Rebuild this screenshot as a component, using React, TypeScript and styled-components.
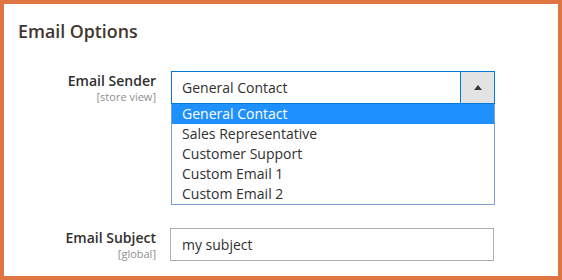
import styled, { createGlobalStyle } from "styled-components";

const GlobalStyle = createGlobalStyle`
  html, body {
    margin: 0;
    padding: 0;
    background: #ffffff;
  }
  body {
    font-family: "Open Sans", "Liberation Sans", sans-serif;
    color: #303030;
  }
`;

const senders = [
  "General Contact",
  "Sales Representative",
  "Customer Support",
  "Custom Email 1",
  "Custom Email 2",
];

const App = () => {
  return (
    <>
      <GlobalStyle />
      <Frame>
        <Legend>Email Options</Legend>
        <Fields>
          <Row>
            <Label>
              <LabelText>Email Sender</LabelText>
              <Scope>[store view]</Scope>
            </Label>
            <Control $shift={1}>
              <SelectBox>
                <SelectValue>General Contact</SelectValue>
                <SelectButton>
                  <Arrow />
                </SelectButton>
              </SelectBox>
              <OptionList>
                {senders.map((s, i) => (
                  <Option key={s} $active={i === 0}>
                    {s}
                  </Option>
                ))}
              </OptionList>
            </Control>
          </Row>
          <Row>
            <Label>
              <LabelText>Email Subject</LabelText>
              <Scope>[global]</Scope>
            </Label>
            <Control>
              <TextInput defaultValue="my subject" />
            </Control>
          </Row>
        </Fields>
      </Frame>
    </>
  );
};

const Frame = styled.div`
  box-sizing: border-box;
  width: 562px;
  height: 280px;
  border: 4px solid #df7642;
  padding: 16px 14px 0;
  background: #ffffff;
`;

const Legend = styled.div`
  font-size: 17.8px;
  font-weight: 600;
  line-height: 22px;
  color: #41362f;
`;

const Fields = styled.div`
  display: flex;
  flex-direction: column;
  gap: 23px;
  margin-top: 29px;
`;

const Row = styled.div`
  display: grid;
  grid-template-columns: 138px 324px;
  column-gap: 14px;
  align-items: start;
`;

const Label = styled.div`
  display: flex;
  flex-direction: column;
  align-items: flex-end;
  padding-top: 1px;
`;

const LabelText = styled.span`
  font-size: 14px;
  font-weight: 600;
  line-height: 18px;
  color: #303030;
`;

const Scope = styled.span`
  font-size: 11px;
  line-height: 14px;
  color: #8f8f8f;
`;

const Control = styled.div<{ $shift?: number }>`
  margin-left: ${(p) => p.$shift ?? 0}px;
  width: 324px;
`;

const SelectBox = styled.div`
  box-sizing: border-box;
  display: flex;
  height: 33px;
  border: 1px solid #007bdb;
`;

const SelectValue = styled.div`
  flex: 1;
  display: flex;
  align-items: center;
  padding-left: 10px;
  font-size: 14px;
  color: #303030;
`;

const SelectButton = styled.div`
  width: 33px;
  display: flex;
  align-items: center;
  justify-content: center;
  background: #e3e3e3;
  border-left: 1px solid #007bdb;
`;

const Arrow = styled.span`
  width: 0;
  height: 0;
  border-left: 4px solid transparent;
  border-right: 4px solid transparent;
  border-bottom: 5px solid #41362f;
`;

const OptionList = styled.ul`
  box-sizing: border-box;
  list-style: none;
  margin: 0;
  padding: 0;
  border: 1px solid #7f9ed6;
  border-top: none;
`;

const Option = styled.li<{ $active?: boolean }>`
  height: 20px;
  line-height: 20px;
  padding-left: 10px;
  font-size: 14px;
  color: ${(p) => (p.$active ? "#ffffff" : "#303030")};
  background: ${(p) => (p.$active ? "#1e90ff" : "transparent")};
`;

const TextInput = styled.input`
  box-sizing: border-box;
  width: 324px;
  height: 33px;
  border: 1px solid #adadad;
  border-radius: 0;
  padding: 0 11px;
  font-family: "Open Sans", "Liberation Sans", sans-serif;
  font-size: 14px;
  color: #303030;
  outline: none;
`;

export default App;
